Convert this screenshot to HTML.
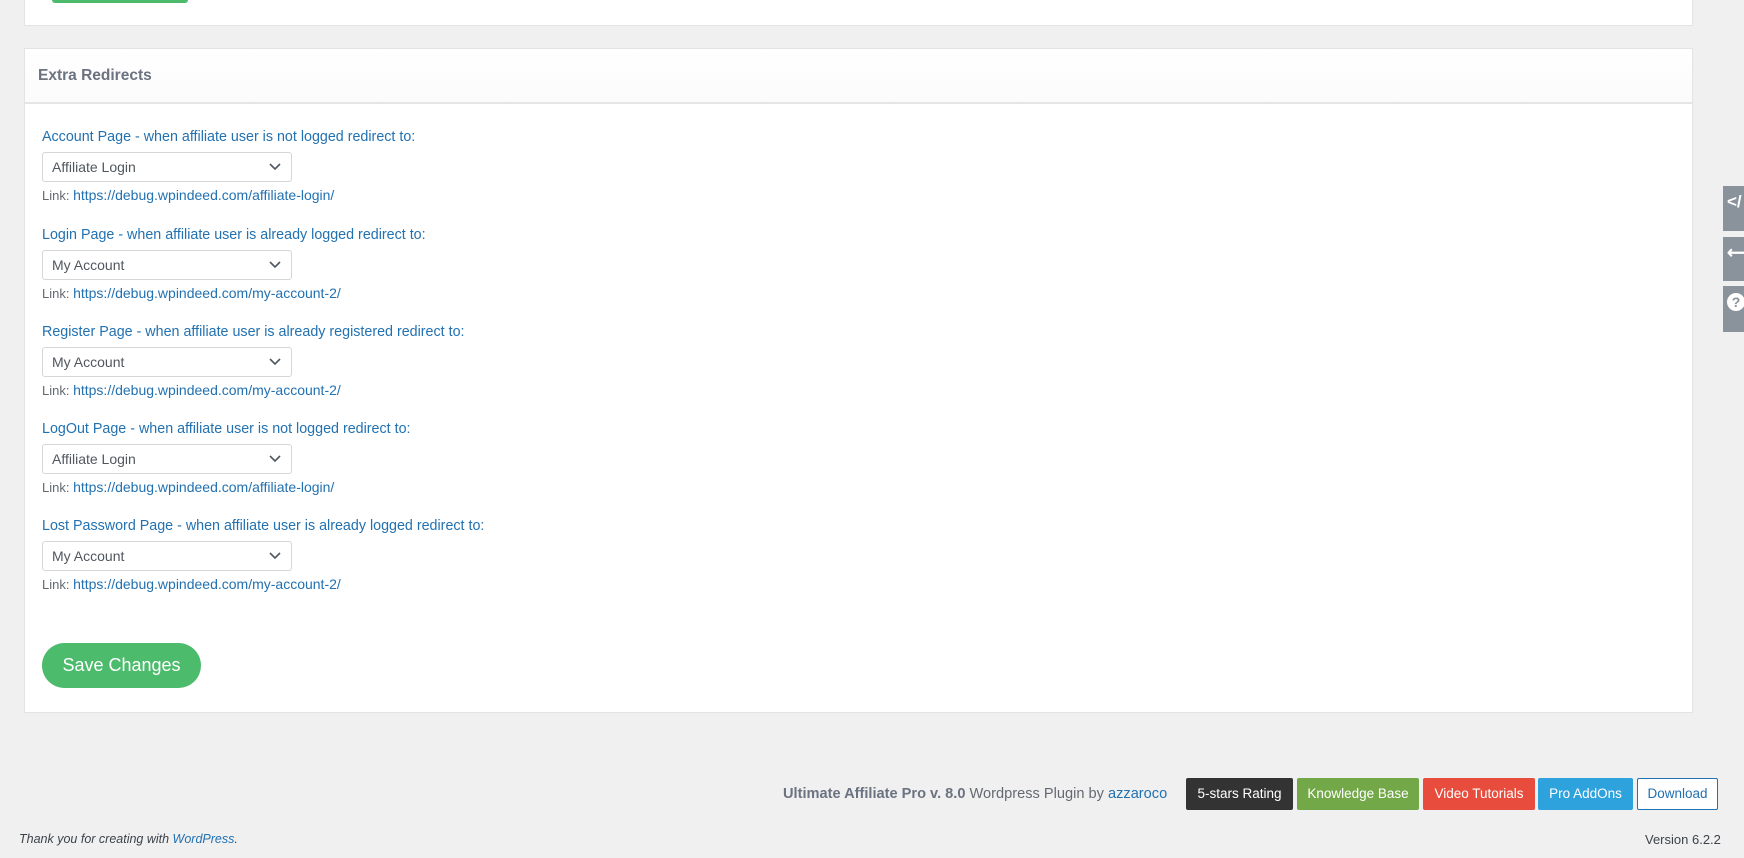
<!DOCTYPE html>
<html><head><meta charset="utf-8"><style>
*{box-sizing:border-box;margin:0;padding:0}
body{width:1744px;height:858px;background:#f0f0f1;font-family:"Liberation Sans",Arial,sans-serif;position:relative;overflow:hidden;color:#50575e}
.box{position:absolute;left:24px;width:1669px;background:#fff;border:1px solid #e3e3e3}
.top{top:-2px;height:28px}
.g{position:absolute;left:52px;top:0;width:136px;height:3px;background:#4cbb6c;border-radius:0 0 10px 10px;z-index:2}
.main{top:48px;height:665px}
.hd{height:55px;border-bottom:2px solid #e5e5e5;background:linear-gradient(#fff,#fbfbfb);padding:18px 0 0 13px;font-weight:bold;font-size:15.5px;color:#6b7280}
.f{position:absolute;left:17px}
.lab{font-size:14.3px;color:#2271b1;white-space:nowrap}
.sel{margin-top:7px;width:250px;height:30px;border:1px solid #d6d6d6;border-radius:3px;font-size:14px;color:#50575e;padding:6px 0 0 9px;position:relative}
.sel svg{position:absolute;right:10px;top:10px}
.lk{margin-top:5px;font-size:13px;color:#646970}
.lk span{color:#2271b1;font-size:14px}
.btn{position:absolute;left:17px;top:594px;width:159px;height:45px;border-radius:23px;background:#4cbb6c;color:#fff;font-size:18px;text-align:center;line-height:45px}
.ft{position:absolute;top:786px;font-size:14.6px;color:#646970}
.b{position:absolute;top:778px;height:32px;color:#fff;font-size:13.5px;text-align:center;line-height:32px;border-radius:2px}
.tab{position:absolute;left:1723px;width:21px;background:#8a929b;color:#fff;font-size:17px;font-weight:bold;padding:6px 0 0 4px;overflow:hidden}
</style></head><body>
<div class="box top"></div>
<div class="g"></div>
<div class="box main">
<div class="hd">Extra Redirects</div>
<div class="f" style="top:80px"><div class="lab">Account Page - when affiliate user is not logged redirect to:</div><div class="sel">Affiliate Login<svg width="12" height="8" viewBox="0 0 12 8"><path d="M1 1l5 5 5-5" stroke="#50575e" stroke-width="1.6" fill="none"/></svg></div><div class="lk">Link: <span>https://debug.wpindeed.com/affiliate-login/</span></div></div>
<div class="f" style="top:178px"><div class="lab">Login Page - when affiliate user is already logged redirect to:</div><div class="sel">My Account<svg width="12" height="8" viewBox="0 0 12 8"><path d="M1 1l5 5 5-5" stroke="#50575e" stroke-width="1.6" fill="none"/></svg></div><div class="lk">Link: <span>https://debug.wpindeed.com/my-account-2/</span></div></div>
<div class="f" style="top:275px"><div class="lab">Register Page - when affiliate user is already registered redirect to:</div><div class="sel">My Account<svg width="12" height="8" viewBox="0 0 12 8"><path d="M1 1l5 5 5-5" stroke="#50575e" stroke-width="1.6" fill="none"/></svg></div><div class="lk">Link: <span>https://debug.wpindeed.com/my-account-2/</span></div></div>
<div class="f" style="top:372px"><div class="lab">LogOut Page - when affiliate user is not logged redirect to:</div><div class="sel">Affiliate Login<svg width="12" height="8" viewBox="0 0 12 8"><path d="M1 1l5 5 5-5" stroke="#50575e" stroke-width="1.6" fill="none"/></svg></div><div class="lk">Link: <span>https://debug.wpindeed.com/affiliate-login/</span></div></div>
<div class="f" style="top:469px"><div class="lab">Lost Password Page - when affiliate user is already logged redirect to:</div><div class="sel">My Account<svg width="12" height="8" viewBox="0 0 12 8"><path d="M1 1l5 5 5-5" stroke="#50575e" stroke-width="1.6" fill="none"/></svg></div><div class="lk">Link: <span>https://debug.wpindeed.com/my-account-2/</span></div></div>
<div class="btn">Save Changes</div>
</div>
<div class="ft" style="left:783px"><b style="color:#6b7280">Ultimate Affiliate Pro v. 8.0</b> Wordpress Plugin by <span style="color:#2271b1">azzaroco</span></div>
<div class="b" style="left:1186px;width:107px;background:#333">5-stars Rating</div>
<div class="b" style="left:1297px;width:122px;background:#72a848">Knowledge Base</div>
<div class="b" style="left:1423px;width:112px;background:#e74c3c">Video Tutorials</div>
<div class="b" style="left:1538px;width:95px;background:#2ea2dc">Pro AddOns</div>
<div class="b" style="left:1637px;width:81px;background:#fff;border:1px solid #2271b1;color:#2271b1;line-height:30px">Download</div>
<div class="ft" style="top:832px;left:19px;font-size:12.5px;font-style:italic;color:#3c434a">Thank you for creating with <span style="color:#2271b1">WordPress</span>.</div>
<div class="ft" style="top:832px;left:1645px;font-size:13px;color:#3c434a">Version 6.2.2</div>
<div class="tab" style="top:186px;height:45px">&lt;/</div>
<div class="tab" style="top:237px;height:44px">⟵</div>
<div class="tab" style="top:286px;height:46px"><span style="display:inline-block;width:18px;height:18px;border-radius:50%;background:#fff;color:#8a929b;font-size:14px;text-align:center;line-height:18px">?</span></div>
</body></html>
